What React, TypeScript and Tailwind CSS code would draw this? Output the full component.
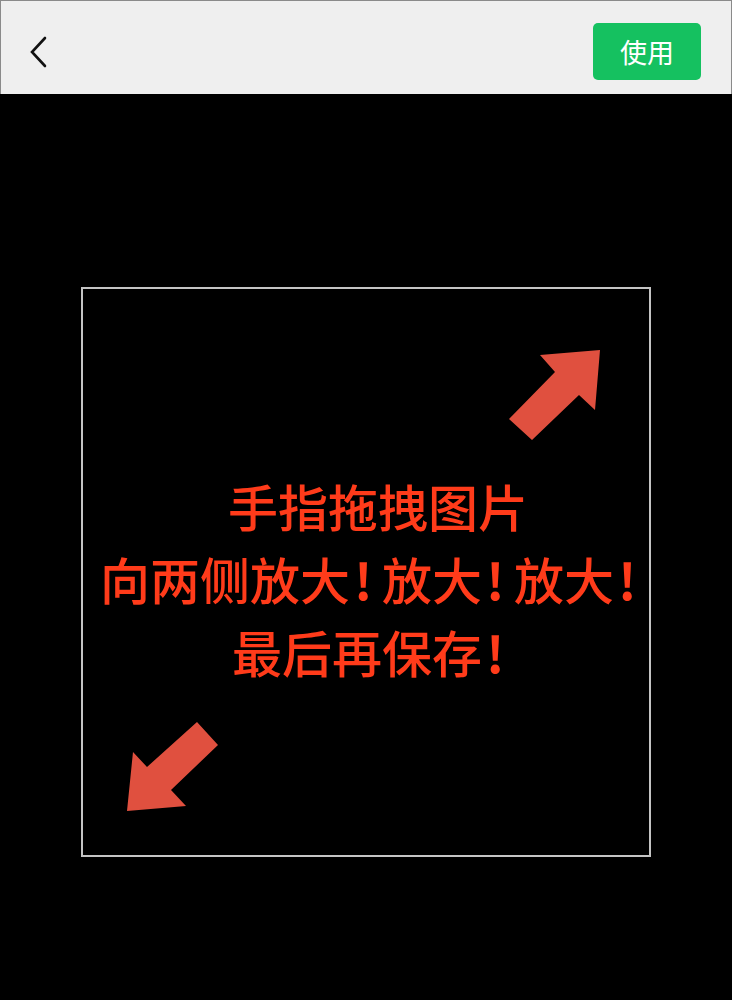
import React from "react";

const Bang = () => (
  <span className="inline-block w-[32px] pl-[4px] text-left font-bold">!</span>
);

export default function App() {
  return (
    <div className="w-[732px] h-[1000px] bg-black overflow-hidden flex flex-col" style={{ fontFamily: '"Noto Sans CJK SC", "Noto Sans", sans-serif' }}>
      <header className="h-[94px] shrink-0 bg-[#efefef] border-t border-x border-[#8a8a8a] flex items-center justify-between pl-[20px] pr-[30px]">
        <svg width="30" height="40" viewBox="0 0 30 40" className="ml-[4px] mt-[8px]">
          <polyline points="20,6 7,20 20,34" fill="none" stroke="#111" strokeWidth="2.6" strokeLinecap="round" strokeLinejoin="miter" />
        </svg>
        <button className="w-[108px] h-[57px] rounded-[5px] bg-[#15c160] text-white text-[27px] leading-none flex items-center justify-center mt-[7px]">
          使用
        </button>
      </header>
      <main className="flex-1 flex justify-center pt-[193px]">
        <div className="relative w-[570px] h-[570px] border-2 border-[#c4c4c4] flex flex-col items-center pt-[180px] text-[#ff3b1a] text-[50px] font-medium leading-[73px]">
          <svg className="absolute left-[-81px] top-[-287px]" width="732" height="1000" viewBox="0 0 732 1000">
            <polygon points="598,348 538,353 553,370 507,417 530,438 577,393 593,408" fill="#e0503f" />
            <polygon points="195,720 216,743 169,788 184,804 125,809 131,750 145,765" fill="#e0503f" />
          </svg>
          <div className="relative pl-[24px]">手指拖拽图片</div>
          <div className="relative pl-[14px]">向两侧放大<Bang />放大<Bang />放大<Bang /></div>
          <div className="relative pl-[14px]">最后再保存<Bang /></div>
        </div>
      </main>
    </div>
  );
}
